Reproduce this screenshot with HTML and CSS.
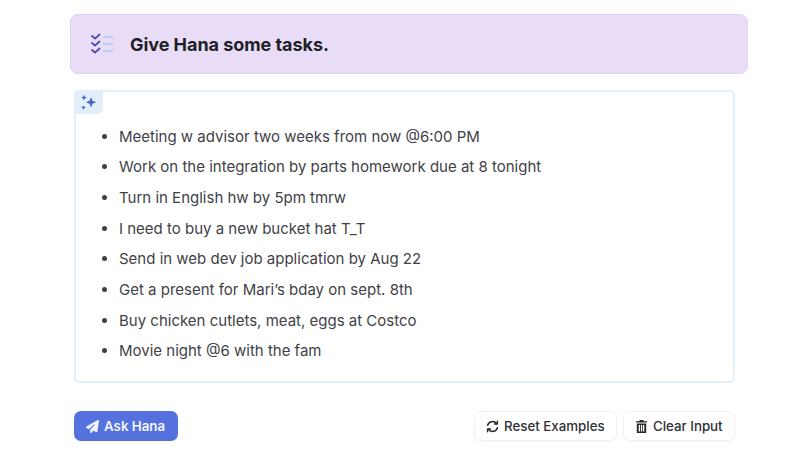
FILE: index.html
```html
<!DOCTYPE html>
<html lang="en">
<head>
<meta charset="utf-8">
<title>Give Hana some tasks</title>
<link rel="stylesheet" href="styles.css">
</head>
<body>
<main class="page">
  <header class="banner">
    <svg class="banner-icon" width="23" height="22" viewBox="0 0 23 22" fill="none">
      <g stroke="#4f46b8" stroke-width="1.8" stroke-linecap="round" stroke-linejoin="round">
        <path d="M1 3l3 2.600L8.500 1.500"/>
        <path d="M1 10l3 2.600L8.500 8.500"/>
        <path d="M1 17l3 2.600L8.500 15.500"/>
      </g>
      <g stroke="#b4d0f7" stroke-width="2" stroke-linecap="butt">
        <path d="M12 4h10"/>
        <path d="M12 11h10"/>
        <path d="M12 18h10"/>
      </g>
    </svg>
    <h1 class="banner-title">Give Hana some tasks.</h1>
  </header>

  <section class="input-box">
    <span class="sparkle-tab">
      <svg width="18" height="17" viewBox="0 0 18 17" fill="#4a68c4">
        <path d="M11 3.200l1.500 3.600 3.700 1.500-3.700 1.500L11 13.400 9.500 9.800 5.800 8.300l3.700-1.500z"/>
        <path d="M4 .8l.9 2 2 .9-2 .9-.9 2-.9-2-2-.9 2-.9z"/>
        <path d="M3.500 11.200l.7 1.600 1.600.7-1.600.7-.7 1.600-.7-1.600-1.600-.7 1.600-.7z"/>
      </svg>
    </span>
    <ul class="task-list">
      <li>Meeting w advisor two weeks from now @6:00 PM</li>
      <li>Work on the integration by parts homework due at 8 tonight</li>
      <li>Turn in English hw by 5pm tmrw</li>
      <li>I need to buy a new bucket hat T_T</li>
      <li>Send in web dev job application by Aug 22</li>
      <li>Get a present for Mari’s bday on sept. 8th</li>
      <li>Buy chicken cutlets, meat, eggs at Costco</li>
      <li>Movie night @6 with the fam</li>
    </ul>
  </section>

  <footer class="actions">
    <button class="btn btn-primary" type="button">
      <svg width="13" height="13" viewBox="0 0 512 512" fill="#f2f4fd">
        <path d="M498.100 5.600c10.100 7 15.400 19.100 13.500 31.200l-64 416c-1.500 9.700-7.400 18.200-16 23s-18.900 5.400-28 1.600L284 427.700l-68.500 74.100c-8.900 9.700-22.900 12.900-35.200 8.100S160 493.200 160 480V396.400c0-4 1.500-7.800 4.200-10.700L331.800 202.800c5.800-6.300 5.600-16-.4-22s-15.700-6.400-22-.7L106 360.800 17.700 316.600C7.100 311.300 .3 300.700 0 288.900s5.900-22.800 16.100-28.700l448-256c10.700-6.100 23.900-5.500 34 1.400z"/>
      </svg>
      Ask Hana
    </button>
    <div class="actions-right">
      <button class="btn btn-light btn-reset" type="button">
        <svg width="13" height="13" viewBox="0 0 16 16" fill="none" stroke="#27272a" stroke-width="1.800" stroke-linecap="round" stroke-linejoin="round">
          <path d="M2 6.500A6.200 6.200 0 0 1 13 4.500"/>
          <path d="M14 1.500v3.500h-3.500"/>
          <path d="M14 9.500A6.200 6.200 0 0 1 3 11.500"/>
          <path d="M2 14.500V11h3.500"/>
        </svg>
        Reset Examples
      </button>
      <button class="btn btn-light btn-clear" type="button">
        <svg width="11" height="13" viewBox="0 0 11 13" fill="#27272a">
          <path d="M3.800 0h3.400l.6 1.200H11v1.300H0V1.200h3.200z"/>
          <path fill-rule="evenodd" d="M.8 3.400h9.400V13H.8zM2.700 5v6.400h1.300V5zM4.900 5v6.400h1.300V5zM7 5v6.400h1.300V5z"/>
        </svg>
        Clear Input
      </button>
    </div>
  </footer>
</main>
</body>
</html>
```
FILE: styles.css
```css
* { box-sizing: border-box; }
html, body { margin: 0; padding: 0; background: #fff; }
body {
  width: 806px;
  height: 453px;
  overflow: hidden;
  font-family: Inter, "Liberation Sans", sans-serif;
}
.page {
  padding: 14px 58px 0 70px;
  display: flex;
  flex-direction: column;
}
.banner {
  height: 60px;
  display: flex;
  align-items: center;
  gap: 16px;
  padding-left: 20px;
  background: #e9dcf6;
  border: 1px solid #dfd3ee;
  border-radius: 8px;
}
.banner-icon { flex: none; }
.banner-title {
  margin: 0;
  font-size: 18px;
  font-weight: 700;
  color: #1f1f27;
  letter-spacing: -0.05px;
}
.input-box {
  position: relative;
  margin: 16px 13px 0 4px;
  height: 293px;
  border: 2px solid #e6f0fa;
  border-radius: 5px;
  padding: 29.500px 0 0 43px;
}
.sparkle-tab {
  position: absolute;
  top: -2px;
  left: -2px;
  width: 29px;
  height: 24px;
  display: flex;
  align-items: center;
  justify-content: center;
  background: #e3eefb;
  border-radius: 4px 0 6px 0;
}
.task-list {
  margin: 0;
  padding: 0;
  list-style: disc;
  font-size: 15px;
  line-height: 30.700px;
  color: #3f3f47;
}
.actions {
  display: flex;
  justify-content: space-between;
  align-items: center;
  margin: 28px 13px 0 4px;
}
.actions-right { display: flex; gap: 6px; }
.btn {
  height: 30px;
  display: inline-flex;
  align-items: center;
  border-radius: 7px;
  font-family: inherit;
  font-size: 13.300px;
  font-weight: 500;
  white-space: nowrap;
  cursor: pointer;
}
.btn-primary {
  width: 104px;
  gap: 5px;
  padding: 0 0 0 12px;
  background: #5571de;
  border: none;
  color: #f2f4fd;
  font-weight: 600;
}
.btn-light {
  background: #fff;
  border: 1px solid #f1f1f3;
  color: #303036;
  box-shadow: 0 1px 2px rgba(0,0,0,.04);
}
.btn-reset {
  width: 143px;
  gap: 5px;
  padding: 0 0 0 11px;
}
.btn-clear {
  width: 112px;
  gap: 6px;
  padding: 0 0 0 12px;
}
```
